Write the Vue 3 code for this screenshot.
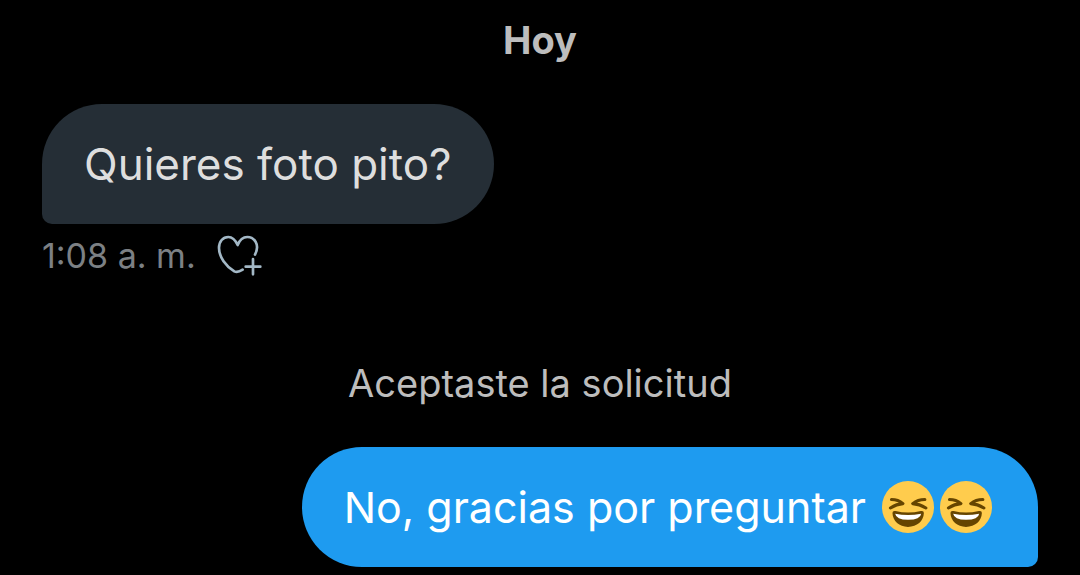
<script setup>
const reply = { text: 'No, gracias por preguntar', laughs: 2 }
</script>

<template>
  <main class="chat">
    <h2 class="day">Hoy</h2>

    <article class="message received">
      <p class="bubble">Quieres foto pito?</p>
      <footer class="meta">
        <time datetime="01:08">1:08 a. m.</time>
        <button class="react" type="button" aria-label="Reaccionar">
          <svg viewBox="45 42 150 132" aria-hidden="true">
            <path d="M165 104C181 73 162 51 142 51C128 51 119 60 113 75C106 60 98 51 85 51C69 51 57 64 57 84C57 111 78 139 103 154C112 159 119 155 128 149" />
            <path d="M159 117V163M137 140H181" />
          </svg>
        </button>
      </footer>
    </article>

    <p class="notice">Aceptaste la solicitud</p>

    <article class="message sent">
      <p class="bubble">
        <span>{{ reply.text }}</span>
        <span class="emojis">
          <svg v-for="n in reply.laughs" :key="n" viewBox="18 18 154 154" role="img" aria-label="Risa">
            <circle cx="95" cy="95" r="77" fill="#ffcc4d" />
            <g fill="none" stroke="#664500" stroke-width="9" stroke-linecap="round" stroke-linejoin="round">
              <path d="M46 73Q66 73 80 85Q61 86 43 98" />
              <path d="M145 73Q124 73 109 85Q129 86 148 98" />
            </g>
            <path d="M49 113Q49 105 58 107Q95 116 133 107Q142 105 142 113C141 137 122 154 95 154C69 154 50 137 49 113Z" fill="#664500" />
            <path d="M57 115Q95 123 134 115Q132 133 95 133Q60 133 57 115Z" fill="#fff" />
          </svg>
        </span>
      </p>
    </article>
  </main>
</template>

<style>
body {
  margin: 0;
  background: #000;
}
</style>

<style scoped>
.chat {
  display: flex;
  flex-direction: column;
  padding: 16px 42px 8px;
  font-family: Inter, "Liberation Sans", sans-serif;
  color: #bdbdbd;
}

.day,
.notice {
  margin: 0;
  font-size: 38px;
  line-height: 48px;
  text-align: center;
}

.day {
  font-weight: 700;
}

.message {
  display: flex;
  flex-direction: column;
  align-items: flex-start;
}

.received {
  margin-top: 40px;
}

.sent {
  align-items: flex-end;
  margin-top: 40px;
}

.bubble {
  display: flex;
  align-items: center;
  gap: 16px;
  margin: 0;
  padding: 30px 42px;
  border-radius: 60px 60px 60px 10px;
  background: #252e36;
  color: #dedede;
  font-size: 44px;
  line-height: 60px;
}

.sent .bubble {
  padding-right: 46px;
  border-radius: 60px 60px 10px 60px;
  background: #1e9bf0;
  color: #fff;
  font-size: 43px;
}

.emojis {
  display: flex;
  gap: 6px;
}

.emojis svg {
  width: 52px;
  height: 52px;
}

.meta {
  display: flex;
  align-items: center;
  gap: 19px;
  margin-top: 10px;
  color: #7c8084;
  font-size: 34px;
  line-height: 44px;
}

.react {
  display: flex;
  padding: 0;
  border: 0;
  background: none;
  cursor: pointer;
}

.react svg {
  width: 50px;
  height: 44px;
  fill: none;
  stroke: #a3b8c6;
  stroke-width: 8;
  stroke-linecap: round;
  stroke-linejoin: round;
}

.notice {
  margin-top: 81px;
}
</style>
